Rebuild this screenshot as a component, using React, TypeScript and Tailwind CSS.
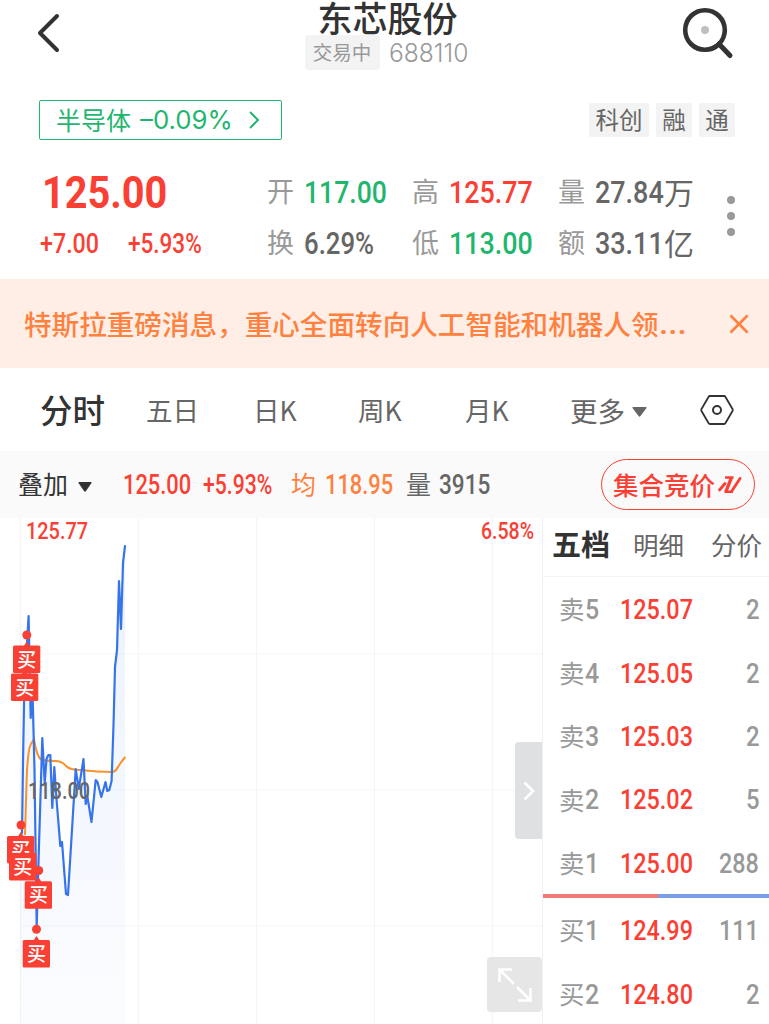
import { useLayoutEffect, useRef, useState } from "react";

// Squeezes its text horizontally into a box that is w pixels wide
function Fit({ w, className = "", children }: { w: number; className?: string; children: string }) {
  const ref = useRef<HTMLSpanElement>(null);
  const [scale, setScale] = useState<number>(1);

  useLayoutEffect(() => {
    if (ref.current) {
      setScale(w / ref.current.offsetWidth);
    }
  }, [w, children]);

  return (
    <span className={`block shrink-0 whitespace-nowrap ${className}`} style={{ width: w }}>
      <span ref={ref} className="inline-block origin-left" style={{ transform: `scaleX(${scale})` }}>
        {children}
      </span>
    </span>
  );
}

const num = "font-['Roboto','Liberation_Sans',sans-serif]";

const asks = [
  { label: "卖", level: "5", price: "125.07", count: "2" },
  { label: "卖", level: "4", price: "125.05", count: "2" },
  { label: "卖", level: "3", price: "125.03", count: "2" },
  { label: "卖", level: "2", price: "125.02", count: "5" },
  { label: "卖", level: "1", price: "125.00", count: "288" },
];

const bids = [
  { label: "买", level: "1", price: "124.99", count: "111" },
  { label: "买", level: "2", price: "124.80", count: "2" },
];

const pricePoints =
  "22,315 23,245 24.3,170 28.6,98 30.7,200 32.5,172 34.5,252 36.7,408 38.6,340 42.3,220 44.7,265 46.5,241 48.3,237 50.3,237 52.3,290 54.3,249 56.5,281 60.3,328 62,324 66,376 68,377 75.7,251 78.7,271 83.5,241 85.7,286 87.3,278 91.5,304 95.7,262 97.5,264 101.3,279 105.5,264 107.3,273 109.3,272 111.6,263 113.5,207 115,149 117,132 119,63 121,111 123,45 125,28";

// x, y: top left corner of the tag; dot: centre of the point it belongs to
const markers = [
  { x: 13, y: 127.5, dot: [26.8, 117] },
  { x: 11, y: 155.5, dot: null },
  { x: 7, y: 318, dot: [21, 307] },
  { x: 9, y: 335, dot: null },
  { x: 24.7, y: 363.3, dot: [38.7, 352.5] },
  { x: 22.7, y: 422, dot: [36.5, 411.3] },
];

function Header() {
  return (
    <div className="flex h-[79px] justify-between">
      <svg className="ml-9 mt-3 h-[42px] w-[26px]" viewBox="0 0 26 42" fill="none" stroke="#333" strokeWidth="4" strokeLinecap="round" strokeLinejoin="round">
        <path d="M21 4 4 21l17 17" />
      </svg>
      <div className="ml-[30px] flex flex-col items-center">
        <h1 className="h-[35px] pl-[3px] text-[35px] leading-[33px] font-medium text-[#333]">东芯股份</h1>
        <div className="flex items-center gap-[9px]">
          <span className="flex h-[35px] w-[75px] items-center justify-center rounded bg-[#f3f3f3] pb-0.5 text-[19.5px] leading-none text-[#999]">
            交易中
          </span>
          <Fit w={79} className="font-['Inter',sans-serif] text-[25.5px] leading-[35px] font-light text-[#999]">688110</Fit>
        </div>
      </div>
      <svg className="mr-[35px] mt-[6px] h-[54px] w-[54px]" viewBox="0 0 54 54" fill="none">
        <circle cx="25" cy="24" r="19.8" stroke="#333" strokeWidth="4.6" />
        <path d="m39 38 11 11.5" stroke="#333" strokeWidth="5" strokeLinecap="round" />
        <circle cx="25" cy="24" r="4" fill="#bfbfbf" />
      </svg>
    </div>
  );
}

function Tags() {
  return (
    <div className="flex h-[82px] items-start justify-between pt-[21px] pr-[34px] pl-[39px]">
      <div className="flex h-10 w-[243px] items-center rounded-[2px] border-[1.5px] border-[#1fb66f] pl-4 text-[#1fb66f]">
        <span className="pb-0.5 text-[25px] leading-none">半导体</span>
        <Fit w={93} className="ml-[9px] font-['Inter',sans-serif] text-[25.5px] leading-10">–0.09%</Fit>
        <svg className="ml-[15px] h-5 w-3" viewBox="0 0 12 20" fill="none" stroke="currentColor" strokeWidth="2">
          <path d="m2 2 8 8-8 8" />
        </svg>
      </div>
      <div className="mt-[3px] flex gap-[7px] text-[23.5px] leading-[33px] text-[#666]">
        <span className="h-[34px] w-[60px] rounded-[2px] bg-[#f3f3f3] text-center">科创</span>
        <span className="h-[34px] w-9 rounded-[2px] bg-[#f3f3f3] text-center">融</span>
        <span className="h-[34px] w-9 rounded-[2px] bg-[#f3f3f3] text-center">通</span>
      </div>
    </div>
  );
}

function Cell({ label, value, w, unit, color }: { label: string; value: string; w: number; unit?: string; color: string }) {
  return (
    <div className={`flex h-[51px] items-center ${color}`}>
      <span className="mr-[10px] -mt-1 text-[27px] leading-none text-[#999]">{label}</span>
      <Fit w={w} className={`${num} text-[32px] leading-[51px] font-medium`}>{value}</Fit>
      {unit && <span className="-mt-1 text-[30px] leading-none">{unit}</span>}
    </div>
  );
}

function Quote() {
  return (
    <div className="flex h-[118px] pt-[6px] text-[#fa4034]">
      <div className="w-[267px] shrink-0 pl-10">
        <Fit w={125} className={`${num} ml-[1.5px] h-[51px] text-[43.5px] leading-[53px] font-bold`}>125.00</Fit>
        <div className="flex gap-[29px]">
          <Fit w={59} className={`${num} text-[28px] leading-[51px] font-medium`}>+7.00</Fit>
          <Fit w={74} className={`${num} text-[28px] leading-[51px] font-medium`}>+5.93%</Fit>
        </div>
      </div>
      <div className="w-[145px] shrink-0">
        <Cell label="开" value="117.00" w={83} color="text-[#1fb66f]" />
        <Cell label="换" value="6.29%" w={70} color="text-[#666]" />
      </div>
      <div className="w-[146px] shrink-0">
        <Cell label="高" value="125.77" w={84} color="text-[#fa4034]" />
        <Cell label="低" value="113.00" w={84} color="text-[#1fb66f]" />
      </div>
      <div className="w-[169px] shrink-0">
        <Cell label="量" value="27.84" w={69} unit="万" color="text-[#666]" />
        <Cell label="额" value="33.11" w={69} unit="亿" color="text-[#666]" />
      </div>
      <div className="flex flex-col gap-2 pt-[29px]">
        <i className="size-2 rounded-full bg-[#999]" />
        <i className="size-2 rounded-full bg-[#999]" />
        <i className="size-2 rounded-full bg-[#999]" />
      </div>
    </div>
  );
}

function Banner() {
  return (
    <div className="flex h-[89px] items-center justify-between bg-[#feeee6] pr-5 pl-6 text-[#ff8140]">
      <div className="flex items-center pb-0.5">
        <Fit w={635} className="text-[27.5px] leading-10 font-medium">特斯拉重磅消息，重心全面转向人工智能和机器人领</Fit>
        <Fit w={28} className={`${num} text-[32px] leading-10 font-medium`}>...</Fit>
      </div>
      <svg className="h-5 w-5" viewBox="0 0 20 20" fill="none" stroke="currentColor" strokeWidth="2.6">
        <path d="m1.5 1.5 17 17m0-17-17 17" />
      </svg>
    </div>
  );
}

function Tabs() {
  return (
    <div className="flex h-[83px] items-center pt-0.5 text-[26.5px] leading-none text-[#666]">
      <span className="-mt-0.5 ml-10 w-[106px] text-[32.5px] font-medium text-[#333]">分时</span>
      <span className="w-[107px]">五日</span>
      <span className="w-[105px]">日K</span>
      <span className="w-[107px]">周K</span>
      <span className="w-[105px]">月K</span>
      <span className="text-[27.5px]">更多</span>
      <svg className="mt-0.5 ml-[7px] h-[10px] w-[15px]" viewBox="0 0 15 10" fill="currentColor">
        <path d="M1 0h13q1 0 .5 1L8.5 9q-1 1.3-2 0L.5 1Q0 0 1 0" />
      </svg>
      <svg className="-mt-0.5 ml-[53px] h-[32px] w-[34px]" viewBox="0 0 34 32" fill="none" stroke="#333" strokeLinejoin="round">
        <path d="M10 2h14q1 0 1.5 1l7 12q.5 1 0 2l-7 12q-.5 1-1.5 1H10q-1 0-1.5-1l-7-12q-.5-1 0-2l7-12q.5-1 1.5-1z" strokeWidth="1.8" />
        <circle cx="17" cy="16" r="4" strokeWidth="2" />
      </svg>
    </div>
  );
}

function SubBar() {
  return (
    <div className="flex h-[67px] items-center bg-[#fafafa] pt-0.5 text-[#fa4034]">
      <span className="-mt-1 ml-[18px] text-[25px] leading-none text-[#333]">叠加</span>
      <svg className="mt-0.5 ml-[10px] h-[10px] w-[14px]" viewBox="0 0 14 10" fill="#333">
        <path d="M1 0h12q1 0 .5 1L8 9Q7 10.3 6 9L.5 1Q0 0 1 0" />
      </svg>
      <Fit w={68} className={`${num} ml-[31px] text-[27px] leading-[65px] font-medium`}>125.00</Fit>
      <Fit w={69} className={`${num} ml-3 text-[27px] leading-[65px] font-medium`}>+5.93%</Fit>
      <span className="-mt-1 ml-[19px] text-[25px] leading-none text-[#ff8140]">均</span>
      <Fit w={68} className={`${num} ml-[9px] text-[27px] leading-[65px] font-medium text-[#ff8140]`}>118.95</Fit>
      <span className="-mt-1 ml-[13px] text-[25px] leading-none text-[#666]">量</span>
      <Fit w={51} className={`${num} ml-2 text-[27px] leading-[65px] font-medium text-[#666]`}>3915</Fit>
      <button className="-mt-0.5 mr-[14px] ml-auto flex h-[51px] w-[154px] items-center rounded-full border border-[#fa4034] pl-[11px]">
        <span className="-mt-0.5 text-[25.5px] leading-none font-medium">集合竞价</span>
        <svg className="ml-[3px] h-[18px] w-6" viewBox="0 0 24 18" fill="none" stroke="currentColor">
          <path d="M7 1.5h8.5M6.5 15.8H15" strokeWidth="2.4" />
          <path d="M13.5 1.5 8 15.5" strokeWidth="3.4" />
          <path d="M1.5 14 7 7.5M13.5 15.5 22 2.5" strokeWidth="2.8" strokeLinecap="round" />
        </svg>
      </button>
    </div>
  );
}

function Chart() {
  return (
    <div className="relative h-[506px] w-[542px] shrink-0">
      <svg className="block h-full w-full" viewBox="0 0 542 506">
        <defs>
          <linearGradient id="area" x1="0" y1="0" x2="0" y2="1">
            <stop offset="0" stopColor="#3877f0" stopOpacity=".1" />
            <stop offset="1" stopColor="#3877f0" stopOpacity=".02" />
          </linearGradient>
        </defs>
        <path d="M20.5 0v506M138.5 0v506M256.5 0v506M374.5 0v506M492.5 0v506M20 136h522M20 272h522M20 408h522" stroke="#f5f5f5" strokeWidth="1.2" />
        <polygon points={`20,506 20,315 ${pricePoints} 125,506`} fill="url(#area)" />
        <path
          d="M25 317 26.7 259Q28 230 31 226L34 221Q37 239 41 241.5Q45 243 55 243Q62 243 66 248Q70 252 80 252Q97 254 113 254Q116 253 118 249Q121 244 125.3 239"
          fill="none"
          stroke="#f9912c"
          strokeWidth="2"
        />
        <polyline points={pricePoints} fill="none" stroke="#3574ec" strokeWidth="2.2" strokeLinejoin="round" strokeLinecap="round" />
        <g fontFamily="Roboto, sans-serif" fontSize="24" fontWeight="500">
          <text x="26" y="21" textLength="62" lengthAdjust="spacingAndGlyphs" fill="#fa4034">125.77</text>
          <text x="481" y="21" textLength="53" lengthAdjust="spacingAndGlyphs" fill="#fa4034">6.58%</text>
          <text x="28" y="281" textLength="62" lengthAdjust="spacingAndGlyphs" fill="#666">118.00</text>
        </g>
        {markers.map((m, i) => (
          <g key={i} fill="#fa4034">
            {m.dot && <circle cx={m.dot[0]} cy={m.dot[1]} r="4.5" />}
            <path d={`M${m.x + 10.5} ${m.y + 1}l3.3-5 3.3 5z`} />
            <rect x={m.x} y={m.y} width="27.3" height="27.5" rx="1.5" />
            <text x={m.x + 4.2} y={m.y + 21} fontSize="19" fontWeight="500" fill="#fff">买</text>
          </g>
        ))}
      </svg>
      <button className="absolute top-[224px] right-0 flex h-[97px] w-[27px] items-center justify-center rounded-l bg-[#dfe0e2]">
        <svg className="h-5 w-3" viewBox="0 0 12 20" fill="none" stroke="#fff" strokeWidth="2.6">
          <path d="m1.5 1.5 8.5 8.5-8.5 8.5" />
        </svg>
      </button>
      <button className="absolute top-[439px] right-0 flex size-[55px] items-center justify-center rounded bg-[#e6e6e6]">
        <svg className="h-9 w-9" viewBox="0 0 36 36" fill="none" stroke="#fff" strokeWidth="2.6">
          <path d="M2.5 15V2.5H15M3 3l14 14M20 20l13 13M21 33.5h12.5V21" />
        </svg>
      </button>
    </div>
  );
}

function Row({ label, level, price, count }: { label: string; level: string; price: string; count: string }) {
  return (
    <div className="flex h-[63.4px] items-center pt-[3px] pr-[10px] pl-4 text-[#999]">
      <span className="-mt-1 text-[25.5px] leading-none">{label}</span>
      <Fit w={14} className={`${num} text-[28.5px] leading-[60px] font-medium`}>{level}</Fit>
      <Fit w={73} className={`${num} ml-[21px] text-[28.5px] leading-[60px] font-medium text-[#fa4034]`}>{price}</Fit>
      <Fit w={count.length * 13.4} className={`${num} ml-auto text-[28.5px] leading-[60px] font-medium`}>{count}</Fit>
    </div>
  );
}

function OrderBook() {
  return (
    <div className="flex-1 border-l border-[#f0f0f0]">
      <div className="flex h-[59px] items-center border-b border-[#f3f3f3] pb-[7px] pl-[9px] text-[25.5px] leading-none text-[#666]">
        <span className="w-[81px] text-[29px] font-bold text-[#333]">五档</span>
        <span className="w-[78px]">明细</span>
        <span>分价</span>
      </div>
      {asks.map((r) => (
        <Row key={r.level} {...r} />
      ))}
      <div className="flex h-1">
        <div className="w-[115px] bg-[#ee7c77]" />
        <div className="flex-1 bg-[#7b9ce8]" />
      </div>
      {bids.map((r) => (
        <Row key={r.level} {...r} />
      ))}
    </div>
  );
}

export default function App() {
  return (
    <div className="h-[1024px] w-[769px] overflow-hidden bg-white font-['Noto_Sans_CJK_SC',sans-serif]">
      <Header />
      <Tags />
      <Quote />
      <Banner />
      <Tabs />
      <SubBar />
      <div className="flex">
        <Chart />
        <OrderBook />
      </div>
    </div>
  );
}
